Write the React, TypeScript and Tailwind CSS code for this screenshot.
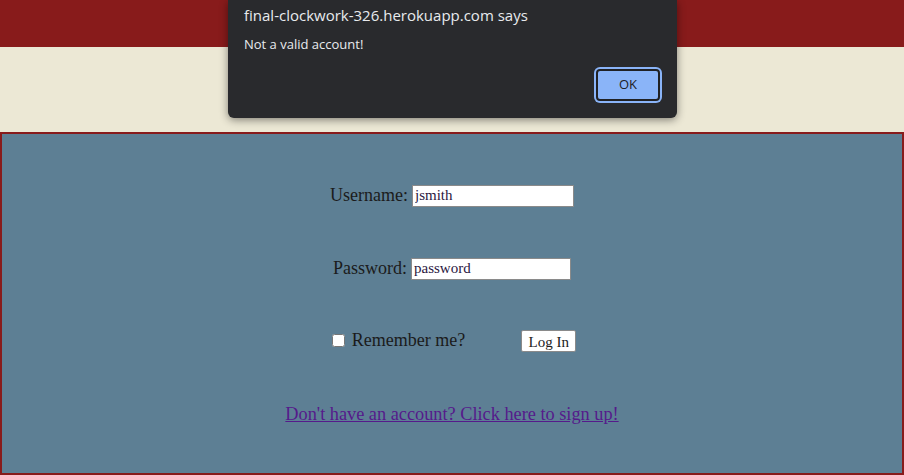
import React from 'react';

const serif = { fontFamily: '"Liberation Serif", "DejaVu Serif", serif' };

function AlertDialog() {
  return (
    <div
      className="absolute left-[228px] top-0 w-[449px] h-[118px] bg-[#292a2d] rounded-b-[6px] shadow-[0_2px_8px_rgba(0,0,0,0.45)] text-[#e8eaed]"
      style={{ fontFamily: '"Segoe UI", "Open Sans", "Noto Sans", sans-serif' }}
    >
      <div className="pl-[16px] pt-[5px] text-[15px] leading-[20px]">final-clockwork-326.herokuapp.com says</div>
      <div className="pl-[16px] pt-[10px] text-[13px] leading-[18px]">Not a valid account!</div>
      <div className="flex justify-end pr-[17px] pt-[16px]">
        <button className="w-[64px] h-[32px] rounded-[4px] bg-[#8ab4f8] border-2 border-[#202124] ring-2 ring-[#8ab4f8] text-[#202124] text-[13px]">
          OK
        </button>
      </div>
    </div>
  );
}

export default function App() {
  return (
    <div className="relative w-[904px] h-[475px] bg-[#ece8d5] overflow-hidden" style={serif}>
      {/* header bar */}
      <div className="h-[47px] bg-[#881b1b]" />
      <div className="h-[85px]" />

      {/* login panel */}
      <div className="h-[343px] border-2 border-[#881b1b] bg-[#5d7f94] text-[#1b1b1b] flex flex-col items-center pt-[51px]">
        <div className="flex items-center gap-[4px] h-[21px] text-[18px]">
          <span>Username:</span>
          <input
            defaultValue="jsmith"
            className="w-[162px] h-[22px] bg-white border border-[#8a8a8a] px-[2px] text-[15px] text-[#2a1640] outline-none"
            style={serif}
          />
        </div>

        <div className="flex items-center gap-[4px] h-[21px] text-[18px] mt-[52px]">
          <span>Password:</span>
          <input
            defaultValue="password"
            className="w-[160px] h-[22px] bg-white border border-[#8a8a8a] px-[2px] text-[15px] text-[#2a1640] outline-none"
            style={serif}
          />
        </div>

        <div className="flex items-center h-[21px] mt-[52px] text-[18px] ml-[4px]">
          <input type="checkbox" className="w-[13px] h-[13px] m-0 mr-[7px] -mt-[2px]" />
          <span className="-mt-[2px]">Remember me?</span>
          <button
            className="ml-[56px] w-[55px] h-[22px] -mt-[1px] bg-white border border-[#8a8a8a] rounded-[2px] text-[15px] text-[#1b1b1b]"
            style={serif}
          >
            Log In
          </button>
        </div>

        <a href="#" className="mt-[49px] text-[18.3px] text-[#551a8b] underline">
          Don't have an account? Click here to sign up!
        </a>
      </div>

      <AlertDialog />
    </div>
  );
}
